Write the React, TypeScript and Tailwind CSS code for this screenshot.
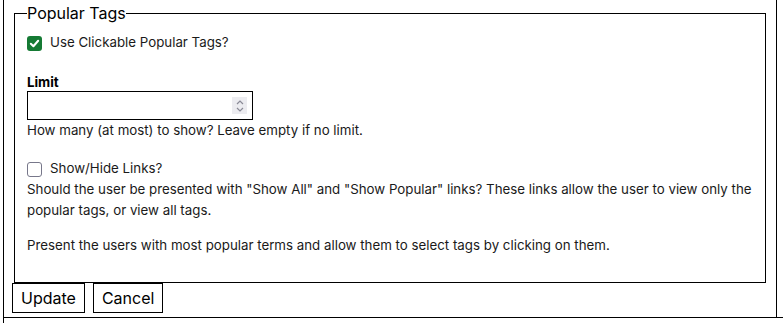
import { useState } from 'react'

function Box({ checked, onClick }: { checked: boolean; onClick: () => void }) {
    return (
        <button
            type="button"
            onClick={onClick}
            className={
                checked
                    ? 'w-[15px] h-[15px] rounded-[3px] bg-[#157a34] flex items-center justify-center shrink-0'
                    : 'w-[15px] h-[15px] rounded-[3px] border-[1.5px] border-[#77778a] bg-white shrink-0'
            }
        >
            {checked && (
                <svg width="11" height="11" viewBox="0 0 12 12">
                    <path d="M2 6.3 L4.8 9 L10 3" fill="none" stroke="white" strokeWidth="2.2" strokeLinecap="round" strokeLinejoin="round" />
                </svg>
            )}
        </button>
    )
}

export default function App() {
    const [clickable, setClickable] = useState(true)
    const [links, setLinks] = useState(false)
    const [limit, setLimit] = useState('')

    return (
        <div className="ml-[3px] h-[323px] border-l border-black font-['Inter',sans-serif] text-[13.3px] text-[#1a1a1a]">
            <div className="w-[773px] h-[317px] border-r border-black px-[8px]">
                <fieldset className="mx-[2px] border border-black pl-[12px] pr-[12px] pt-[7px] pb-[27px]">
                    <legend className="text-[16px] leading-[26px] text-black">Popular Tags</legend>

                    {/* clickable toggle */}
                    <label className="flex items-center h-[20px] gap-[8px] cursor-pointer">
                        <Box checked={clickable} onClick={() => setClickable(!clickable)} />
                        <span>Use Clickable Popular Tags?</span>
                    </label>

                    <div className="mt-[20px] font-bold leading-[18px] text-black">Limit</div>
                    <div className="relative w-[226px] h-[29px] border border-black">
                        <input
                            value={limit}
                            onChange={e => setLimit(e.target.value)}
                            className="w-full h-full px-[4px] outline-none"
                        />
                        <div className="absolute right-[5px] top-[5px] w-[15px] h-[17px] bg-[#ececf0] flex flex-col items-center justify-center gap-[2px]">
                            <svg width="8" height="5" viewBox="0 0 8 5">
                                <path d="M1 4 L4 1 L7 4" fill="none" stroke="#8a8a96" strokeWidth="1.2" />
                            </svg>
                            <svg width="8" height="5" viewBox="0 0 8 5">
                                <path d="M1 1 L4 4 L7 1" fill="none" stroke="#8a8a96" strokeWidth="1.2" />
                            </svg>
                        </div>
                    </div>
                    <div className="leading-[20px]">How many (at most) to show? Leave empty if no limit.</div>

                    <label className="mt-[19px] flex items-center h-[20px] gap-[8px] cursor-pointer">
                        <Box checked={links} onClick={() => setLinks(!links)} />
                        <span>Show/Hide Links?</span>
                    </label>
                    <p className="leading-[21px]">
                        Should the user be presented with "Show All" and "Show Popular" links? These links allow the user to view only the popular tags, or view all tags.
                    </p>

                    <p className="mt-[14px] leading-[20px]">
                        Present the users with most popular terms and allow them to select tags by clicking on them.
                    </p>
                </fieldset>

                <div className="flex gap-[8px] text-[16px] text-black">
                    <button className="h-[30px] px-[8px] border border-black bg-white">Update</button>
                    <button className="h-[30px] px-[8px] border border-black bg-white">Cancel</button>
                </div>
            </div>
            <div className="w-[780px] border-t border-black" />
        </div>
    )
}
